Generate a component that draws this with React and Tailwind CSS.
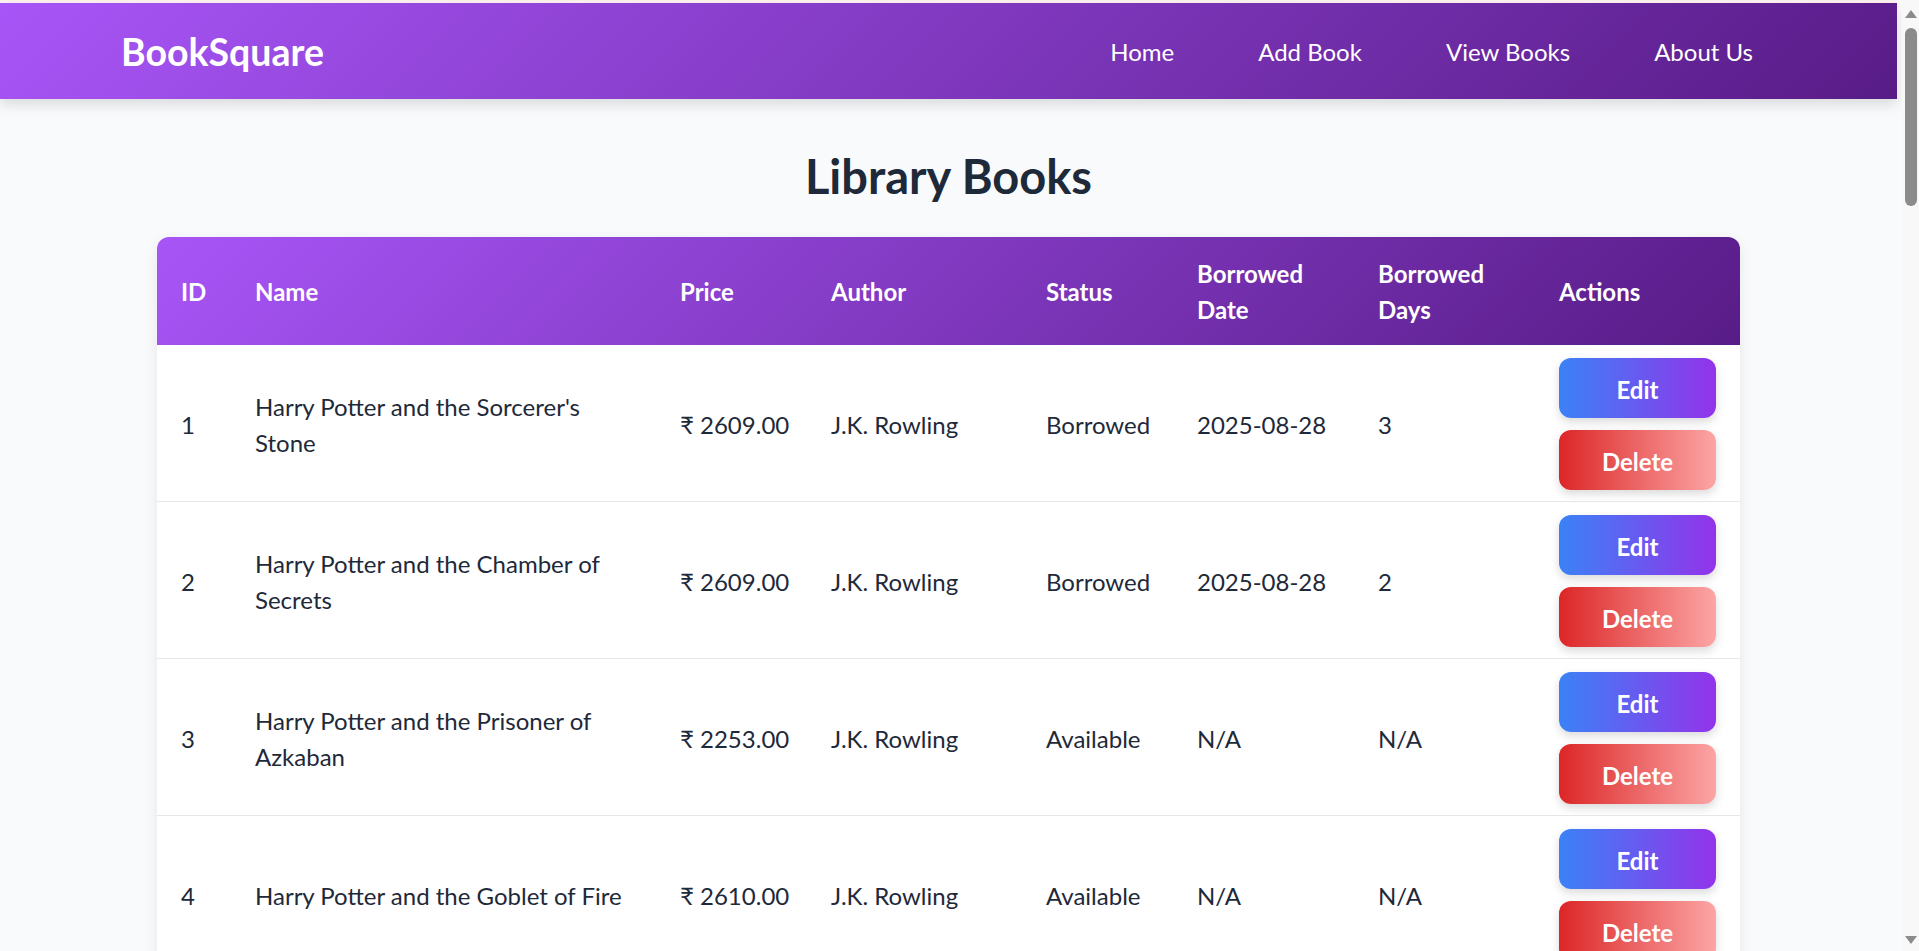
import React from "react";

const NAV_LINKS = ["Home", "Add Book", "View Books", "About Us"];

const BOOKS = [
  { id: 1, name: "Harry Potter and the Sorcerer's Stone", price: "2609.00", author: "J.K. Rowling", status: "Borrowed", date: "2025-08-28", days: "3" },
  { id: 2, name: "Harry Potter and the Chamber of Secrets", price: "2609.00", author: "J.K. Rowling", status: "Borrowed", date: "2025-08-28", days: "2" },
  { id: 3, name: "Harry Potter and the Prisoner of Azkaban", price: "2253.00", author: "J.K. Rowling", status: "Available", date: "N/A", days: "N/A" },
  { id: 4, name: "Harry Potter and the Goblet of Fire", price: "2610.00", author: "J.K. Rowling", status: "Available", date: "N/A", days: "N/A" },
  { id: 5, name: "Harry Potter and the Order of the Phoenix", price: "2750.00", author: "J.K. Rowling", status: "Available", date: "N/A", days: "N/A" },
  { id: 6, name: "Harry Potter and the Half-Blood Prince", price: "2480.00", author: "J.K. Rowling", status: "Available", date: "N/A", days: "N/A" },
];

// column widths taken from the table layout
const GRID = "grid grid-cols-[74px_425px_151px_215px_151px_181px_181px_205px]";

function Navbar() {
  return (
    <nav className="h-[96px] bg-[linear-gradient(135deg,#a855f7,#581c87)] shadow-[0_6px_12px_rgba(0,0,0,0.12)] flex items-center justify-between pl-[121px] pr-[120px] relative z-10">
      <span className="text-[37.5px] leading-[48px] font-bold text-white relative top-[1px]">BookSquare</span>
      <div className="flex gap-[36px] relative top-[1px]">
        {NAV_LINKS.map((link) => (
          <a key={link} href="#" className="px-[24px] text-[24px] leading-[36px] text-white">
            {link}
          </a>
        ))}
      </div>
    </nav>
  );
}

function Cell({ children }) {
  return (
    <div className="px-[24px] flex items-center">
      <span className="relative top-[2px]">{children}</span>
    </div>
  );
}

function BookRow({ book }) {
  return (
    <div className={`${GRID} border-b border-gray-200 text-[24px] leading-[36px] text-gray-800`}>
      <Cell>{book.id}</Cell>
      <Cell>{book.name}</Cell>
      <Cell>
        <span className="whitespace-nowrap">₹ {book.price}</span>
      </Cell>
      <Cell>{book.author}</Cell>
      <Cell>{book.status}</Cell>
      <Cell>{book.date}</Cell>
      <Cell>{book.days}</Cell>
      <div className="px-[24px] pt-[13px] pb-[11px] flex flex-col gap-[12px]">
        <button className="h-[60px] w-full rounded-[12px] bg-[linear-gradient(to_right,#3b82f6,#9333ea)] text-white font-bold text-[24px] pt-[4px] shadow-[0_4px_10px_rgba(0,0,0,0.15)]">
          Edit
        </button>
        <button className="h-[60px] w-full rounded-[12px] bg-[linear-gradient(to_right,#dc2626,#fca5a5)] text-white font-bold text-[24px] pt-[4px] shadow-[0_4px_10px_rgba(0,0,0,0.15)]">
          Delete
        </button>
      </div>
    </div>
  );
}

function FakeScrollbar() {
  return (
    <div className="fixed top-0 right-0 w-[17px] h-screen bg-[#f8f8f8] z-20 flex flex-col items-center">
      <div className="mt-[10px] w-0 h-0 border-l-[6px] border-r-[6px] border-b-[8px] border-l-transparent border-r-transparent border-b-[#8b8b8b]" />
      <div className="mt-[10px] w-[12px] h-[178px] rounded-full bg-[#8b8b8b]" />
      <div className="mt-auto mb-[7px] w-0 h-0 border-l-[6px] border-r-[6px] border-t-[8px] border-l-transparent border-r-transparent border-t-[#8b8b8b]" />
    </div>
  );
}

export default function App() {
  const headers = ["ID", "Name", "Price", "Author", "Status", "Borrowed Date", "Borrowed Days", "Actions"];

  return (
    <div className="min-h-screen bg-gray-50 [font-family:Lato,'Noto_Sans',sans-serif]">
      <FakeScrollbar />
      <div className="w-[1897px]">
        <div className="h-[3px] bg-[#fdf1f0]" />
        <Navbar />

        <main className="pt-[48px] pb-[48px]">
          <h1 className="text-center text-[47px] leading-[54px] font-bold text-gray-800 mb-[36px] relative top-[2px]">
            Library Books
          </h1>

          <div className="mx-auto w-[1583px] rounded-[12px] overflow-hidden bg-white shadow-[0_4px_14px_rgba(0,0,0,0.08)]">
            <div className={`${GRID} py-[18px] bg-[linear-gradient(135deg,#a855f7,#581c87)] text-white text-[24px] leading-[36px] font-bold`}>
              {headers.map((h) => (
                <div key={h} className="px-[24px] flex items-center">
                  <span className="relative top-[1px]">{h}</span>
                </div>
              ))}
            </div>
            {BOOKS.map((book) => (
              <BookRow key={book.id} book={book} />
            ))}
          </div>
        </main>
      </div>
    </div>
  );
}
